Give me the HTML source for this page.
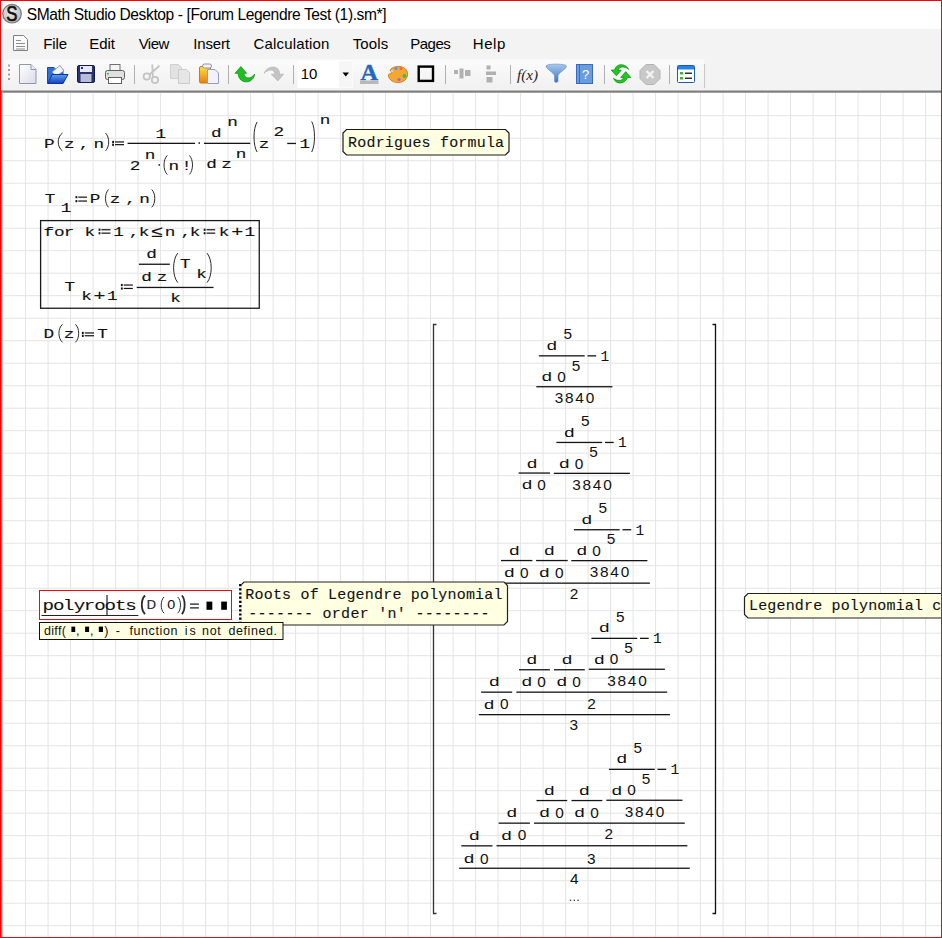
<!DOCTYPE html><html><head><meta charset="utf-8"><style>html,body{margin:0;padding:0;background:#fff;overflow:hidden}svg{display:block}</style></head><body>
<svg width="942" height="938" viewBox="0 0 942 938">
<rect x="0" y="0" width="942" height="29" fill="#fff" />
<rect x="0" y="29" width="942" height="62" fill="#f3f3f3" />
<defs><radialGradient id="sg" cx="0.45" cy="0.4" r="0.6"><stop offset="0" stop-color="#ececec"/><stop offset="1" stop-color="#bcbcbc"/></radialGradient><linearGradient id="tbg" x1="0" y1="0" x2="0" y2="1"><stop offset="0" stop-color="#fbfbfb"/><stop offset="1" stop-color="#f1f1f1"/></linearGradient><linearGradient id="docg" x1="0" y1="0" x2="1" y2="1"><stop offset="0" stop-color="#ffffff"/><stop offset="1" stop-color="#d8dce8"/></linearGradient><linearGradient id="foldg" x1="0" y1="0" x2="0" y2="1"><stop offset="0" stop-color="#5aa0f0"/><stop offset="1" stop-color="#1040c0"/></linearGradient><linearGradient id="greeng" x1="0" y1="0" x2="0" y2="1"><stop offset="0" stop-color="#6fe060"/><stop offset="1" stop-color="#109010"/></linearGradient><linearGradient id="pasteg" x1="0" y1="0" x2="0" y2="1"><stop offset="0" stop-color="#ffe040"/><stop offset="1" stop-color="#e88010"/></linearGradient><linearGradient id="funng" x1="0" y1="0" x2="0" y2="1"><stop offset="0" stop-color="#a8c8ec"/><stop offset="1" stop-color="#3a78c0"/></linearGradient></defs>
<circle cx="12" cy="13.7" r="9.3" fill="url(#sg)" stroke="#7a7a7a" stroke-width="1.2"/>
<text x="6.3" y="21.3" font-family="Liberation Sans" font-size="21.5" fill="#111" stroke="#111" stroke-width="0.7" textLength="11.2" lengthAdjust="spacingAndGlyphs">S</text>
<text x="26.69" y="19.90" font-family="Liberation Sans" font-size="15.6" fill="#000" textLength="359.92" lengthAdjust="spacing" >SMath Studio Desktop - [Forum Legendre Test (1).sm*]</text>
<g fill="none" stroke="#808080" stroke-width="1"><path d="M13.5,35.5H23.5L27.5,39.5V50.5H13.5Z" fill="#fafafa"/><path d="M16,40.5H21M16,43.5H25M16,46.5H25M16,49H25" stroke="#909090"/></g>
<text x="43.37" y="48.60" font-family="Liberation Sans" font-size="15" fill="#000" textLength="23.60" lengthAdjust="spacing" >File</text>
<text x="89.27" y="48.60" font-family="Liberation Sans" font-size="15" fill="#000" textLength="25.54" lengthAdjust="spacing" >Edit</text>
<text x="138.63" y="48.60" font-family="Liberation Sans" font-size="15" fill="#000" textLength="30.73" lengthAdjust="spacing" >View</text>
<text x="193.22" y="48.60" font-family="Liberation Sans" font-size="15" fill="#000" textLength="36.69" lengthAdjust="spacing" >Insert</text>
<text x="253.54" y="48.60" font-family="Liberation Sans" font-size="15" fill="#000" textLength="75.74" lengthAdjust="spacing" >Calculation</text>
<text x="352.66" y="48.60" font-family="Liberation Sans" font-size="15" fill="#000" textLength="35.58" lengthAdjust="spacing" >Tools</text>
<text x="410.27" y="48.60" font-family="Liberation Sans" font-size="15" fill="#000" textLength="40.47" lengthAdjust="spacing" >Pages</text>
<text x="472.77" y="48.60" font-family="Liberation Sans" font-size="15" fill="#000" textLength="32.46" lengthAdjust="spacing" >Help</text>
<rect x="3.5" y="59.5" width="701" height="29" rx="3" fill="url(#tbg)"/>
<line x1="704.5" y1="64" x2="704.5" y2="88" stroke="#c8c8c8"/>
<rect x="8" y="64.5" width="2" height="2" fill="#a0a0a0" />
<rect x="8" y="69" width="2" height="2" fill="#a0a0a0" />
<rect x="8" y="73.5" width="2" height="2" fill="#a0a0a0" />
<rect x="8" y="78" width="2" height="2" fill="#a0a0a0" />
<line x1="134.5" y1="65" x2="134.5" y2="84" stroke="#b0b0b0"/>
<line x1="228.5" y1="65" x2="228.5" y2="84" stroke="#b0b0b0"/>
<line x1="293.5" y1="65" x2="293.5" y2="84" stroke="#b0b0b0"/>
<line x1="445.5" y1="65" x2="445.5" y2="84" stroke="#b0b0b0"/>
<line x1="510.5" y1="65" x2="510.5" y2="84" stroke="#b0b0b0"/>
<line x1="604.5" y1="65" x2="604.5" y2="84" stroke="#b0b0b0"/>
<line x1="669.5" y1="65" x2="669.5" y2="84" stroke="#b0b0b0"/>
<path d="M19.5,64.5H31L36,69.5V83.5H19.5Z" fill="url(#docg)" stroke="#9098a8"/><path d="M31,64.5V69.5H36" fill="#e8ecf4" stroke="#9098a8"/>
<path d="M47.5,67.5H54L56,69.5H63V83.5H47.5Z" fill="#3070d8" stroke="#1a4aa0"/><path d="M52,72L60,65.5L64,71L56,76Z" fill="#f4f4ff" stroke="#8090b0" stroke-width="0.8"/><path d="M48,83.5L52,74.5H68L63,83.5Z" fill="url(#foldg)" stroke="#1030a0"/>
<rect x="77.5" y="65.5" width="17" height="17" rx="1.5" fill="#2a3270" stroke="#141a50"/><rect x="80" y="66" width="12" height="6" fill="#e8e8f4"/><rect x="80.5" y="74" width="11" height="8" fill="#b8bcd8"/><rect x="81" y="67" width="2" height="2" fill="#2a3270"/>
<rect x="110" y="64.5" width="10" height="6" fill="#f4f4f4" stroke="#707070"/><rect x="105.5" y="70.5" width="19" height="9" rx="2" fill="#e0e0e0" stroke="#606060"/><rect x="108.5" y="77.5" width="13" height="6" fill="#fff" stroke="#606060"/><rect x="107" y="73" width="2" height="1.5" fill="#40c040"/>
<g fill="none" stroke="#c4c4c4" stroke-width="1.8"><circle cx="146.8" cy="76.5" r="3.2"/><circle cx="155" cy="80" r="3.2"/><path d="M152.3,64.5L152.8,77M159.4,65.8L149.5,74.5"/></g>
<path d="M170.5,64.5H178.5L181.5,67.5V78.5H170.5Z" fill="#e2e2e2" stroke="#d0d0d0"/><path d="M178.5,69.5H186.5L189.5,72.5V83.5H178.5Z" fill="#e6e6e6" stroke="#cccccc"/>
<rect x="199.5" y="66.5" width="11" height="16.5" rx="1.5" fill="url(#pasteg)" stroke="#c07a20"/><rect x="202.5" y="64" width="9" height="4" rx="2" fill="#f4f4f4" stroke="#9090a8"/><path d="M207.5,69.5H215L218.5,73V83.5H207.5Z" fill="#f2f2ff" stroke="#9a9ac0"/>
<path d="M240.9,66.5L235,73.3L238.2,73.3C238.2,79.5 243,83 249,81.5C252,80.5 254.5,77 254.6,74.2C252,77.5 249,78.5 246.5,77.5C244.8,76.8 244.2,75 244.2,73.3L246.6,73.3Z" fill="#20c020" stroke="#0a8a0a" stroke-width="0.7"/>
<path d="M264.1,73.3C266,68 273,65 277.5,68.5C279,69.8 279.6,72 279.6,74.2L283.7,74.2L277.8,81L271.2,74.2L274.8,74.2C274.5,71.5 273,70 271,70C268.5,70 266,71.5 264.1,73.3Z" fill="#c4c4c4" stroke="#b4b4b4" stroke-width="0.6"/>
<rect x="297.5" y="60.5" width="55.5" height="27.5" fill="#fff" />
<rect x="339" y="61" width="13.5" height="26.5" fill="#f6f6f6" />
<text x="300.66" y="78.60" font-family="Liberation Sans" font-size="15" fill="#000" textLength="16.63" lengthAdjust="spacing" >10</text>
<path d="M342.5,72.5H349L345.75,76.5Z" fill="#000"/>
<text x="360.5" y="80.3" font-family="Liberation Serif" font-weight="bold" font-size="23" fill="#2466c0" stroke="#2466c0" stroke-width="0.4" textLength="17.5" lengthAdjust="spacingAndGlyphs">A</text>
<rect x="360" y="80.5" width="18.5" height="3.5" fill="#b8b8b8" />
<path d="M390,70C394,65 404,65 407,71C409,76 406,82 399,82.5C394,83 389,80 388.5,76C388,73 391,74 392,73Z" fill="#f4a830" stroke="#c87020" stroke-width="0.8"/><circle cx="396" cy="68.5" r="1.6" fill="#40a0ff"/><circle cx="401" cy="68.5" r="1.5" fill="#ff6040"/><circle cx="404.5" cy="76" r="2" fill="#40c040"/><circle cx="399" cy="79.5" r="1.6" fill="#a060e0"/><circle cx="392" cy="71" r="1.3" fill="#d0d0d0"/>
<rect x="418.7" y="66.6" width="14.3" height="14.3" fill="none" stroke="#000" stroke-width="2.4"/>
<g fill="#b0b0b0"><rect x="454" y="70" width="4" height="4"/><rect x="459.5" y="68.5" width="4" height="10"/><rect x="465" y="70" width="5.5" height="6"/><rect x="486.5" y="65.5" width="4" height="4"/><rect x="486" y="71.5" width="10" height="3.5"/><rect x="486.5" y="77" width="6" height="5.5"/></g>
<text x="517" y="79.5" font-family="Liberation Serif" font-style="italic" font-size="14" fill="#222" textLength="21" lengthAdjust="spacingAndGlyphs">f(x)</text>
<path d="M546,66C546,63.5 566.5,63.5 566.5,66C566.5,69 558,73 558,76V81.5C558,82.5 554.5,82.5 554.5,81.5V76C554.5,73 546,69 546,66Z" fill="url(#funng)" stroke="#5a88c0" stroke-width="0.6"/>
<rect x="576.5" y="64.5" width="16" height="19" fill="#6a9ce0" stroke="#3a6ac0"/><line x1="579.5" y1="65" x2="579.5" y2="83" stroke="#3a6ac0"/><text x="582" y="79" font-family="Liberation Sans" font-size="13" fill="#fff">?</text>
<path d="M628.7,69.4C626,63.5 616.5,62.5 614.6,70L611.3,70L616.3,75.8L621.2,70.3L618.2,70.1C619.5,66.3 624.5,65.8 628.7,69.4Z" fill="#22c822" stroke="#0a8a0a" stroke-width="0.7"/><path d="M613.5,78.3C615.5,84.5 624.5,85 627.6,77.5L630.9,77.5L625.7,71.7L620.7,77.5L623.9,77.5C622,81.3 617,81.3 613.5,78.3Z" fill="#22c822" stroke="#0a8a0a" stroke-width="0.7"/>
<path d="M646,64.5H654L660,70.5V78.5L654,84.5H646L640,78.5V70.5Z" fill="#c8c8c8" stroke="#b4b4b4"/><path d="M646.5,71L653.5,78M653.5,71L646.5,78" stroke="#f4f4f4" stroke-width="2.2"/>
<rect x="677.5" y="65.5" width="17" height="17" rx="1" fill="#fff" stroke="#1a5ab0"/><rect x="678" y="66" width="16" height="3.5" fill="#2a80e8"/><rect x="680" y="72" width="3" height="2.5" fill="#40b040"/><rect x="680" y="77" width="3" height="2.5" fill="#40b040"/><rect x="685" y="72.5" width="7" height="1.5" fill="#333"/><rect x="685" y="77.5" width="7" height="1.5" fill="#333"/>
<rect x="2" y="93" width="939" height="844" fill="#fff" />
<path d="M25.60,93V937 M48.10,93V937 M70.60,93V937 M93.10,93V937 M115.60,93V937 M138.10,93V937 M160.60,93V937 M183.10,93V937 M205.60,93V937 M228.10,93V937 M250.60,93V937 M273.10,93V937 M295.60,93V937 M318.10,93V937 M340.60,93V937 M363.10,93V937 M385.60,93V937 M408.10,93V937 M430.60,93V937 M453.10,93V937 M475.60,93V937 M498.10,93V937 M520.60,93V937 M543.10,93V937 M565.60,93V937 M588.10,93V937 M610.60,93V937 M633.10,93V937 M655.60,93V937 M678.10,93V937 M700.60,93V937 M723.10,93V937 M745.60,93V937 M768.10,93V937 M790.60,93V937 M813.10,93V937 M835.60,93V937 M858.10,93V937 M880.60,93V937 M903.10,93V937 M925.60,93V937 M2,115.70H941 M2,138.20H941 M2,160.70H941 M2,183.20H941 M2,205.70H941 M2,228.20H941 M2,250.70H941 M2,273.20H941 M2,295.70H941 M2,318.20H941 M2,340.70H941 M2,363.20H941 M2,385.70H941 M2,408.20H941 M2,430.70H941 M2,453.20H941 M2,475.70H941 M2,498.20H941 M2,520.70H941 M2,543.20H941 M2,565.70H941 M2,588.20H941 M2,610.70H941 M2,633.20H941 M2,655.70H941 M2,678.20H941 M2,700.70H941 M2,723.20H941 M2,745.70H941 M2,768.20H941 M2,790.70H941 M2,813.20H941 M2,835.70H941 M2,858.20H941 M2,880.70H941 M2,903.20H941 M2,925.70H941" stroke="#e4e4e4" stroke-width="1" fill="none"/>
<text transform="translate(49.45,147.60) scale(1.18,0.9)" x="-4.69" y="0" font-family="Liberation Mono" font-size="15" fill="#111" stroke="#111" stroke-width="0.15">P</text>
<path d="M62.40,133.10 C56.80,136.99 56.80,146.91 62.40,150.80" fill="none" stroke="#2a2a2a" stroke-width="1.0"/>
<text transform="translate(69.15,147.60) scale(1.18,0.9)" x="-4.45" y="0" font-family="Liberation Mono" font-size="15" fill="#111" stroke="#111" stroke-width="0.15">z</text>
<text transform="translate(82.75,147.60) scale(1.18,0.9)" x="-3.49" y="0" font-family="Liberation Mono" font-size="15" fill="#111" stroke="#111" stroke-width="0.15">,</text>
<text transform="translate(98.75,147.60) scale(1.18,0.9)" x="-4.50" y="0" font-family="Liberation Mono" font-size="15" fill="#111" stroke="#111" stroke-width="0.15">n</text>
<path d="M105.50,133.10 C109.77,136.99 109.77,146.91 105.50,150.80" fill="none" stroke="#2a2a2a" stroke-width="1.0"/>
<rect x="112.20" y="140.85" width="1.8" height="2.2" fill="#111" />
<rect x="112.20" y="143.65" width="1.8" height="2.2" fill="#111" />
<line x1="115.00" y1="141.95" x2="124.00" y2="141.95" stroke="#111" stroke-width="1.2"/>
<line x1="115.00" y1="144.65" x2="124.00" y2="144.65" stroke="#111" stroke-width="1.2"/>
<rect x="127.60" y="142.70" width="67.40" height="1.3" fill="#151515"/>
<text transform="translate(161.00,137.50) scale(1.18,0.9)" x="-4.68" y="0" font-family="Liberation Mono" font-size="15" fill="#111" stroke="#111" stroke-width="0.15">1</text>
<text transform="translate(135.00,169.80) scale(1.18,0.9)" x="-4.50" y="0" font-family="Liberation Mono" font-size="15" fill="#111" stroke="#111" stroke-width="0.15">2</text>
<text transform="translate(150.10,158.50) scale(1.18,0.9)" x="-4.50" y="0" font-family="Liberation Mono" font-size="15" fill="#111" stroke="#111" stroke-width="0.15">n</text>
<rect x="158.5" y="164.2" width="1.5" height="1.5" fill="#111" />
<path d="M167.30,155.40 C162.90,159.60 162.90,170.30 167.30,174.50" fill="none" stroke="#2a2a2a" stroke-width="1.0"/>
<text transform="translate(173.70,169.50) scale(1.18,0.9)" x="-4.50" y="0" font-family="Liberation Mono" font-size="15" fill="#111" stroke="#111" stroke-width="0.15">n</text>
<text transform="translate(186.60,169.80) scale(1.18,0.9)" x="-4.50" y="0" font-family="Liberation Mono" font-size="15" fill="#111" stroke="#111" stroke-width="0.15">!</text>
<path d="M189.30,155.40 C193.57,159.60 193.57,170.30 189.30,174.50" fill="none" stroke="#2a2a2a" stroke-width="1.0"/>
<rect x="198.5" y="142.3" width="1.5" height="1.5" fill="#111" />
<rect x="204.00" y="142.70" width="46.20" height="1.3" fill="#151515"/>
<text transform="translate(216.20,137.30) scale(1.18,0.9)" x="-4.35" y="0" font-family="Liberation Mono" font-size="15" fill="#111" stroke="#111" stroke-width="0.15">d</text>
<text transform="translate(232.50,126.20) scale(1.18,0.9)" x="-4.50" y="0" font-family="Liberation Mono" font-size="15" fill="#111" stroke="#111" stroke-width="0.15">n</text>
<text transform="translate(211.40,168.30) scale(1.18,0.9)" x="-4.35" y="0" font-family="Liberation Mono" font-size="15" fill="#111" stroke="#111" stroke-width="0.15">d</text>
<text transform="translate(226.50,168.30) scale(1.18,0.9)" x="-4.45" y="0" font-family="Liberation Mono" font-size="15" fill="#111" stroke="#111" stroke-width="0.15">z</text>
<text transform="translate(241.00,157.60) scale(1.18,0.9)" x="-4.50" y="0" font-family="Liberation Mono" font-size="15" fill="#111" stroke="#111" stroke-width="0.15">n</text>
<path d="M257.10,122.00 C252.97,128.60 252.97,145.40 257.10,152.00" fill="none" stroke="#2a2a2a" stroke-width="1.0"/>
<text transform="translate(264.00,147.50) scale(1.18,0.9)" x="-4.45" y="0" font-family="Liberation Mono" font-size="15" fill="#111" stroke="#111" stroke-width="0.15">z</text>
<text transform="translate(278.90,136.30) scale(1.18,0.9)" x="-4.50" y="0" font-family="Liberation Mono" font-size="15" fill="#111" stroke="#111" stroke-width="0.15">2</text>
<rect x="287.20" y="142.80" width="8.80" height="1.3" fill="#151515"/>
<text transform="translate(305.00,147.50) scale(1.18,0.9)" x="-4.68" y="0" font-family="Liberation Mono" font-size="15" fill="#111" stroke="#111" stroke-width="0.15">1</text>
<path d="M311.70,121.50 C315.43,128.21 315.43,145.29 311.70,152.00" fill="none" stroke="#2a2a2a" stroke-width="1.0"/>
<text transform="translate(325.10,123.90) scale(1.18,0.9)" x="-4.50" y="0" font-family="Liberation Mono" font-size="15" fill="#111" stroke="#111" stroke-width="0.15">n</text>
<path d="M346.5,129.5H505.5L509,133V151.5L505.5,155H346.5L343,151.5V133Z" fill="#ffffe1" stroke="#1a1a1a" stroke-width="1.2"/>
<text transform="translate(0,146.60) scale(1,0.92)" x="348.11" y="0" font-family="Liberation Mono" font-size="15" fill="#111" textLength="155.99" lengthAdjust="spacing" stroke="#111" stroke-width="0.12">Rodrigues formula</text>
<text transform="translate(50.10,203.40) scale(1.18,0.9)" x="-4.50" y="0" font-family="Liberation Mono" font-size="15" fill="#111" stroke="#111" stroke-width="0.15">T</text>
<text transform="translate(66.30,212.40) scale(1.18,0.9)" x="-4.68" y="0" font-family="Liberation Mono" font-size="15" fill="#111" stroke="#111" stroke-width="0.15">1</text>
<rect x="75.50" y="196.05" width="1.8" height="2.2" fill="#111" />
<rect x="75.50" y="200.05" width="1.8" height="2.2" fill="#111" />
<line x1="78.30" y1="197.15" x2="87.00" y2="197.15" stroke="#111" stroke-width="1.2"/>
<line x1="78.30" y1="201.05" x2="87.00" y2="201.05" stroke="#111" stroke-width="1.2"/>
<text transform="translate(95.25,203.40) scale(1.18,0.9)" x="-4.69" y="0" font-family="Liberation Mono" font-size="15" fill="#111" stroke="#111" stroke-width="0.15">P</text>
<path d="M108.50,189.50 C104.50,193.42 104.50,203.38 108.50,207.30" fill="none" stroke="#2a2a2a" stroke-width="1.0"/>
<text transform="translate(114.90,203.40) scale(1.18,0.9)" x="-4.45" y="0" font-family="Liberation Mono" font-size="15" fill="#111" stroke="#111" stroke-width="0.15">z</text>
<text transform="translate(129.40,203.40) scale(1.18,0.9)" x="-3.49" y="0" font-family="Liberation Mono" font-size="15" fill="#111" stroke="#111" stroke-width="0.15">,</text>
<text transform="translate(144.60,203.40) scale(1.18,0.9)" x="-4.50" y="0" font-family="Liberation Mono" font-size="15" fill="#111" stroke="#111" stroke-width="0.15">n</text>
<path d="M151.70,189.50 C155.83,193.42 155.83,203.38 151.70,207.30" fill="none" stroke="#2a2a2a" stroke-width="1.0"/>
<rect x="40.6" y="220.6" width="218.65" height="87.65" fill="none" stroke="#1a1a1a" stroke-width="1.3"/>
<text transform="translate(48.80,235.80) scale(1.18,0.9)" x="-4.53" y="0" font-family="Liberation Mono" font-size="15" fill="#111" stroke="#111" stroke-width="0.15">f</text>
<text transform="translate(59.30,235.80) scale(1.18,0.9)" x="-4.49" y="0" font-family="Liberation Mono" font-size="15" fill="#111" stroke="#111" stroke-width="0.15">o</text>
<text transform="translate(69.30,235.80) scale(1.18,0.9)" x="-4.71" y="0" font-family="Liberation Mono" font-size="15" fill="#111" stroke="#111" stroke-width="0.15">r</text>
<text transform="translate(90.45,235.80) scale(1.18,0.9)" x="-4.98" y="0" font-family="Liberation Mono" font-size="15" fill="#111" stroke="#111" stroke-width="0.15">k</text>
<rect x="98.60" y="228.65" width="1.8" height="2.2" fill="#111" />
<rect x="98.60" y="232.15" width="1.8" height="2.2" fill="#111" />
<line x1="101.40" y1="229.75" x2="110.50" y2="229.75" stroke="#111" stroke-width="1.2"/>
<line x1="101.40" y1="233.15" x2="110.50" y2="233.15" stroke="#111" stroke-width="1.2"/>
<text transform="translate(118.80,235.80) scale(1.18,0.9)" x="-4.68" y="0" font-family="Liberation Mono" font-size="15" fill="#111" stroke="#111" stroke-width="0.15">1</text>
<text transform="translate(132.85,235.80) scale(1.18,0.9)" x="-3.49" y="0" font-family="Liberation Mono" font-size="15" fill="#111" stroke="#111" stroke-width="0.15">,</text>
<text transform="translate(144.60,235.80) scale(1.18,0.9)" x="-4.98" y="0" font-family="Liberation Mono" font-size="15" fill="#111" stroke="#111" stroke-width="0.15">k</text>
<text transform="translate(156.90,236.50) scale(1.18,0.9)" x="-5.24" y="0" font-family="Liberation Mono" font-size="17.5" fill="#111" stroke="#111" stroke-width="0.15">≤</text>
<text transform="translate(170.00,235.80) scale(1.18,0.9)" x="-4.50" y="0" font-family="Liberation Mono" font-size="15" fill="#111" stroke="#111" stroke-width="0.15">n</text>
<text transform="translate(184.50,235.80) scale(1.18,0.9)" x="-3.49" y="0" font-family="Liberation Mono" font-size="15" fill="#111" stroke="#111" stroke-width="0.15">,</text>
<text transform="translate(195.50,235.80) scale(1.18,0.9)" x="-4.98" y="0" font-family="Liberation Mono" font-size="15" fill="#111" stroke="#111" stroke-width="0.15">k</text>
<rect x="203.70" y="228.65" width="1.8" height="2.2" fill="#111" />
<rect x="203.70" y="232.15" width="1.8" height="2.2" fill="#111" />
<line x1="206.50" y1="229.75" x2="215.20" y2="229.75" stroke="#111" stroke-width="1.2"/>
<line x1="206.50" y1="233.15" x2="215.20" y2="233.15" stroke="#111" stroke-width="1.2"/>
<text transform="translate(224.50,235.80) scale(1.18,0.9)" x="-4.98" y="0" font-family="Liberation Mono" font-size="15" fill="#111" stroke="#111" stroke-width="0.15">k</text>
<text transform="translate(237.30,236.20) scale(1.18,0.9)" x="-5.09" y="0" font-family="Liberation Mono" font-size="17" fill="#111" stroke="#111" stroke-width="0.15">+</text>
<text transform="translate(250.10,235.80) scale(1.18,0.9)" x="-4.68" y="0" font-family="Liberation Mono" font-size="15" fill="#111" stroke="#111" stroke-width="0.15">1</text>
<text transform="translate(69.90,291.00) scale(1.18,0.9)" x="-4.50" y="0" font-family="Liberation Mono" font-size="15" fill="#111" stroke="#111" stroke-width="0.15">T</text>
<text transform="translate(87.00,299.70) scale(1.18,0.9)" x="-4.98" y="0" font-family="Liberation Mono" font-size="15" fill="#111" stroke="#111" stroke-width="0.15">k</text>
<text transform="translate(99.40,300.10) scale(1.18,0.9)" x="-5.09" y="0" font-family="Liberation Mono" font-size="17" fill="#111" stroke="#111" stroke-width="0.15">+</text>
<text transform="translate(112.50,299.70) scale(1.18,0.9)" x="-4.68" y="0" font-family="Liberation Mono" font-size="15" fill="#111" stroke="#111" stroke-width="0.15">1</text>
<rect x="120.90" y="283.95" width="1.8" height="2.2" fill="#111" />
<rect x="120.90" y="287.45" width="1.8" height="2.2" fill="#111" />
<line x1="123.70" y1="285.05" x2="132.80" y2="285.05" stroke="#111" stroke-width="1.2"/>
<line x1="123.70" y1="288.45" x2="132.80" y2="288.45" stroke="#111" stroke-width="1.2"/>
<rect x="136.70" y="286.80" width="76.80" height="1.3" fill="#151515"/>
<rect x="138.90" y="263.60" width="30.90" height="1.3" fill="#151515"/>
<text transform="translate(151.50,258.40) scale(1.18,0.9)" x="-4.35" y="0" font-family="Liberation Mono" font-size="15" fill="#111" stroke="#111" stroke-width="0.15">d</text>
<text transform="translate(146.40,280.70) scale(1.18,0.9)" x="-4.35" y="0" font-family="Liberation Mono" font-size="15" fill="#111" stroke="#111" stroke-width="0.15">d</text>
<text transform="translate(162.00,280.70) scale(1.18,0.9)" x="-4.45" y="0" font-family="Liberation Mono" font-size="15" fill="#111" stroke="#111" stroke-width="0.15">z</text>
<path d="M177.80,253.10 C172.20,259.59 172.20,276.11 177.80,282.60" fill="none" stroke="#2a2a2a" stroke-width="1.0"/>
<text transform="translate(185.40,268.30) scale(1.18,0.9)" x="-4.50" y="0" font-family="Liberation Mono" font-size="15" fill="#111" stroke="#111" stroke-width="0.15">T</text>
<text transform="translate(202.00,277.70) scale(1.18,0.9)" x="-4.98" y="0" font-family="Liberation Mono" font-size="15" fill="#111" stroke="#111" stroke-width="0.15">k</text>
<path d="M207.00,253.10 C212.60,259.59 212.60,276.11 207.00,282.60" fill="none" stroke="#2a2a2a" stroke-width="1.0"/>
<text transform="translate(176.00,302.20) scale(1.18,0.9)" x="-4.98" y="0" font-family="Liberation Mono" font-size="15" fill="#111" stroke="#111" stroke-width="0.15">k</text>
<text transform="translate(49.00,337.80) scale(1.18,0.9)" x="-4.71" y="0" font-family="Liberation Mono" font-size="15" fill="#111" stroke="#111" stroke-width="0.15">D</text>
<path d="M62.50,324.30 C57.70,328.26 57.70,338.34 62.50,342.30" fill="none" stroke="#2a2a2a" stroke-width="1.0"/>
<text transform="translate(69.00,338.20) scale(1.18,0.9)" x="-4.45" y="0" font-family="Liberation Mono" font-size="15" fill="#111" stroke="#111" stroke-width="0.15">z</text>
<path d="M75.40,324.30 C79.80,328.26 79.80,338.34 75.40,342.30" fill="none" stroke="#2a2a2a" stroke-width="1.0"/>
<rect x="81.90" y="331.85" width="1.8" height="2.2" fill="#111" />
<rect x="81.90" y="334.75" width="1.8" height="2.2" fill="#111" />
<line x1="84.70" y1="332.95" x2="94.00" y2="332.95" stroke="#111" stroke-width="1.2"/>
<line x1="84.70" y1="335.75" x2="94.00" y2="335.75" stroke="#111" stroke-width="1.2"/>
<text transform="translate(102.50,337.80) scale(1.18,0.9)" x="-4.50" y="0" font-family="Liberation Mono" font-size="15" fill="#111" stroke="#111" stroke-width="0.15">T</text>
<path d="M436.5,324.5H433.5V913.5H436.5" fill="none" stroke="#333" stroke-width="1.3"/>
<path d="M712.5,324.5H715.5V913.5H712.5" fill="none" stroke="#111" stroke-width="1.3"/>
<text transform="translate(567.80,339.40) scale(1.1,1.0)" x="-3.88" y="0" font-family="Liberation Sans" font-size="14" fill="#111" >5</text>
<text transform="translate(551.50,349.90) scale(1.28,0.92)" x="-4.20" y="0" font-family="Liberation Mono" font-size="14.5" fill="#111" >d</text>
<rect x="538.90" y="355.20" width="45.80" height="1.3" fill="#151515"/>
<rect x="587.50" y="355.20" width="8.70" height="1.3" fill="#151515"/>
<text x="600.38" y="360.70" font-family="Liberation Mono" font-size="14.5" fill="#111" >1</text>
<text transform="translate(576.10,370.50) scale(1.1,1.0)" x="-3.88" y="0" font-family="Liberation Sans" font-size="14" fill="#111" >5</text>
<text transform="translate(546.70,381.10) scale(1.28,0.92)" x="-4.20" y="0" font-family="Liberation Mono" font-size="14.5" fill="#111" >d</text>
<text transform="translate(561.40,381.90) scale(1.1,1.0)" x="-3.89" y="0" font-family="Liberation Sans" font-size="14" fill="#111" >0</text>
<rect x="536.30" y="386.10" width="76.10" height="1.3" fill="#151515"/>
<text transform="translate(559.00,403.00) scale(1.1,1.0)" x="-3.85" y="0" font-family="Liberation Sans" font-size="14" fill="#111" >3</text>
<text transform="translate(569.30,403.00) scale(1.1,1.0)" x="-3.89" y="0" font-family="Liberation Sans" font-size="14" fill="#111" >8</text>
<text transform="translate(579.60,403.00) scale(1.1,1.0)" x="-3.85" y="0" font-family="Liberation Sans" font-size="14" fill="#111" >4</text>
<text transform="translate(589.90,403.00) scale(1.1,1.0)" x="-3.89" y="0" font-family="Liberation Sans" font-size="14" fill="#111" >0</text>
<text transform="translate(585.30,426.00) scale(1.1,1.0)" x="-3.88" y="0" font-family="Liberation Sans" font-size="14" fill="#111" >5</text>
<text transform="translate(569.00,436.50) scale(1.28,0.92)" x="-4.20" y="0" font-family="Liberation Mono" font-size="14.5" fill="#111" >d</text>
<rect x="556.40" y="441.80" width="45.80" height="1.3" fill="#151515"/>
<rect x="605.00" y="441.80" width="8.70" height="1.3" fill="#151515"/>
<text x="617.88" y="447.30" font-family="Liberation Mono" font-size="14.5" fill="#111" >1</text>
<text transform="translate(593.60,457.10) scale(1.1,1.0)" x="-3.88" y="0" font-family="Liberation Sans" font-size="14" fill="#111" >5</text>
<text transform="translate(564.20,467.70) scale(1.28,0.92)" x="-4.20" y="0" font-family="Liberation Mono" font-size="14.5" fill="#111" >d</text>
<text transform="translate(578.90,468.50) scale(1.1,1.0)" x="-3.89" y="0" font-family="Liberation Sans" font-size="14" fill="#111" >0</text>
<rect x="553.80" y="472.70" width="76.10" height="1.3" fill="#151515"/>
<text transform="translate(576.50,489.60) scale(1.1,1.0)" x="-3.85" y="0" font-family="Liberation Sans" font-size="14" fill="#111" >3</text>
<text transform="translate(586.80,489.60) scale(1.1,1.0)" x="-3.89" y="0" font-family="Liberation Sans" font-size="14" fill="#111" >8</text>
<text transform="translate(597.10,489.60) scale(1.1,1.0)" x="-3.85" y="0" font-family="Liberation Sans" font-size="14" fill="#111" >4</text>
<text transform="translate(607.40,489.60) scale(1.1,1.0)" x="-3.89" y="0" font-family="Liberation Sans" font-size="14" fill="#111" >0</text>
<text transform="translate(531.75,467.50) scale(1.28,0.92)" x="-4.20" y="0" font-family="Liberation Mono" font-size="14.5" fill="#111" >d</text>
<rect x="518.60" y="472.40" width="31.40" height="1.3" fill="#151515"/>
<text transform="translate(526.75,489.20) scale(1.28,0.92)" x="-4.20" y="0" font-family="Liberation Mono" font-size="14.5" fill="#111" >d</text>
<text transform="translate(541.40,490.00) scale(1.1,1.0)" x="-3.89" y="0" font-family="Liberation Sans" font-size="14" fill="#111" >0</text>
<text transform="translate(602.80,513.30) scale(1.1,1.0)" x="-3.88" y="0" font-family="Liberation Sans" font-size="14" fill="#111" >5</text>
<text transform="translate(586.50,523.80) scale(1.28,0.92)" x="-4.20" y="0" font-family="Liberation Mono" font-size="14.5" fill="#111" >d</text>
<rect x="573.90" y="529.10" width="45.80" height="1.3" fill="#151515"/>
<rect x="622.50" y="529.10" width="8.70" height="1.3" fill="#151515"/>
<text x="635.38" y="534.60" font-family="Liberation Mono" font-size="14.5" fill="#111" >1</text>
<text transform="translate(611.10,544.40) scale(1.1,1.0)" x="-3.88" y="0" font-family="Liberation Sans" font-size="14" fill="#111" >5</text>
<text transform="translate(581.70,555.00) scale(1.28,0.92)" x="-4.20" y="0" font-family="Liberation Mono" font-size="14.5" fill="#111" >d</text>
<text transform="translate(596.40,555.80) scale(1.1,1.0)" x="-3.89" y="0" font-family="Liberation Sans" font-size="14" fill="#111" >0</text>
<rect x="571.30" y="560.00" width="76.10" height="1.3" fill="#151515"/>
<text transform="translate(594.00,576.90) scale(1.1,1.0)" x="-3.85" y="0" font-family="Liberation Sans" font-size="14" fill="#111" >3</text>
<text transform="translate(604.30,576.90) scale(1.1,1.0)" x="-3.89" y="0" font-family="Liberation Sans" font-size="14" fill="#111" >8</text>
<text transform="translate(614.60,576.90) scale(1.1,1.0)" x="-3.85" y="0" font-family="Liberation Sans" font-size="14" fill="#111" >4</text>
<text transform="translate(624.90,576.90) scale(1.1,1.0)" x="-3.89" y="0" font-family="Liberation Sans" font-size="14" fill="#111" >0</text>
<text transform="translate(514.10,555.00) scale(1.28,0.92)" x="-4.20" y="0" font-family="Liberation Mono" font-size="14.5" fill="#111" >d</text>
<text transform="translate(549.10,555.00) scale(1.28,0.92)" x="-4.20" y="0" font-family="Liberation Mono" font-size="14.5" fill="#111" >d</text>
<rect x="501.00" y="559.90" width="31.40" height="1.3" fill="#151515"/>
<rect x="536.10" y="559.90" width="31.60" height="1.3" fill="#151515"/>
<text transform="translate(509.00,577.10) scale(1.28,0.92)" x="-4.20" y="0" font-family="Liberation Mono" font-size="14.5" fill="#111" >d</text>
<text transform="translate(524.30,577.90) scale(1.1,1.0)" x="-3.89" y="0" font-family="Liberation Sans" font-size="14" fill="#111" >0</text>
<text transform="translate(544.00,577.10) scale(1.28,0.92)" x="-4.20" y="0" font-family="Liberation Mono" font-size="14.5" fill="#111" >d</text>
<text transform="translate(559.30,577.90) scale(1.1,1.0)" x="-3.89" y="0" font-family="Liberation Sans" font-size="14" fill="#111" >0</text>
<rect x="501.00" y="582.50" width="148.90" height="1.3" fill="#151515"/>
<text transform="translate(574.00,599.10) scale(1.1,1.0)" x="-3.89" y="0" font-family="Liberation Sans" font-size="14" fill="#111" >2</text>
<text transform="translate(620.30,621.90) scale(1.1,1.0)" x="-3.88" y="0" font-family="Liberation Sans" font-size="14" fill="#111" >5</text>
<text transform="translate(604.00,632.40) scale(1.28,0.92)" x="-4.20" y="0" font-family="Liberation Mono" font-size="14.5" fill="#111" >d</text>
<rect x="591.40" y="637.70" width="45.80" height="1.3" fill="#151515"/>
<rect x="640.00" y="637.70" width="8.70" height="1.3" fill="#151515"/>
<text x="652.88" y="643.20" font-family="Liberation Mono" font-size="14.5" fill="#111" >1</text>
<text transform="translate(628.60,653.00) scale(1.1,1.0)" x="-3.88" y="0" font-family="Liberation Sans" font-size="14" fill="#111" >5</text>
<text transform="translate(599.20,663.60) scale(1.28,0.92)" x="-4.20" y="0" font-family="Liberation Mono" font-size="14.5" fill="#111" >d</text>
<text transform="translate(613.90,664.40) scale(1.1,1.0)" x="-3.89" y="0" font-family="Liberation Sans" font-size="14" fill="#111" >0</text>
<rect x="588.80" y="668.60" width="76.10" height="1.3" fill="#151515"/>
<text transform="translate(611.50,685.50) scale(1.1,1.0)" x="-3.85" y="0" font-family="Liberation Sans" font-size="14" fill="#111" >3</text>
<text transform="translate(621.80,685.50) scale(1.1,1.0)" x="-3.89" y="0" font-family="Liberation Sans" font-size="14" fill="#111" >8</text>
<text transform="translate(632.10,685.50) scale(1.1,1.0)" x="-3.85" y="0" font-family="Liberation Sans" font-size="14" fill="#111" >4</text>
<text transform="translate(642.40,685.50) scale(1.1,1.0)" x="-3.89" y="0" font-family="Liberation Sans" font-size="14" fill="#111" >0</text>
<text transform="translate(531.65,663.50) scale(1.28,0.92)" x="-4.20" y="0" font-family="Liberation Mono" font-size="14.5" fill="#111" >d</text>
<text transform="translate(566.75,663.50) scale(1.28,0.92)" x="-4.20" y="0" font-family="Liberation Mono" font-size="14.5" fill="#111" >d</text>
<rect x="519.00" y="669.10" width="30.90" height="1.3" fill="#151515"/>
<rect x="554.00" y="669.10" width="30.80" height="1.3" fill="#151515"/>
<text transform="translate(526.55,685.80) scale(1.28,0.92)" x="-4.20" y="0" font-family="Liberation Mono" font-size="14.5" fill="#111" >d</text>
<text transform="translate(541.50,686.60) scale(1.1,1.0)" x="-3.89" y="0" font-family="Liberation Sans" font-size="14" fill="#111" >0</text>
<text transform="translate(561.65,685.80) scale(1.28,0.92)" x="-4.20" y="0" font-family="Liberation Mono" font-size="14.5" fill="#111" >d</text>
<text transform="translate(576.60,686.60) scale(1.1,1.0)" x="-3.89" y="0" font-family="Liberation Sans" font-size="14" fill="#111" >0</text>
<text transform="translate(494.10,685.80) scale(1.28,0.92)" x="-4.20" y="0" font-family="Liberation Mono" font-size="14.5" fill="#111" >d</text>
<rect x="481.10" y="691.50" width="31.10" height="1.3" fill="#151515"/>
<rect x="516.40" y="691.50" width="150.80" height="1.3" fill="#151515"/>
<text transform="translate(488.85,708.50) scale(1.28,0.92)" x="-4.20" y="0" font-family="Liberation Mono" font-size="14.5" fill="#111" >d</text>
<text transform="translate(504.20,709.30) scale(1.1,1.0)" x="-3.89" y="0" font-family="Liberation Sans" font-size="14" fill="#111" >0</text>
<text transform="translate(591.50,709.30) scale(1.1,1.0)" x="-3.89" y="0" font-family="Liberation Sans" font-size="14" fill="#111" >2</text>
<rect x="478.80" y="714.00" width="191.10" height="1.3" fill="#151515"/>
<text transform="translate(573.70,730.30) scale(1.1,1.0)" x="-3.85" y="0" font-family="Liberation Sans" font-size="14" fill="#111" >3</text>
<text transform="translate(637.80,752.90) scale(1.1,1.0)" x="-3.88" y="0" font-family="Liberation Sans" font-size="14" fill="#111" >5</text>
<text transform="translate(621.50,763.40) scale(1.28,0.92)" x="-4.20" y="0" font-family="Liberation Mono" font-size="14.5" fill="#111" >d</text>
<rect x="608.90" y="768.70" width="45.80" height="1.3" fill="#151515"/>
<rect x="657.50" y="768.70" width="8.70" height="1.3" fill="#151515"/>
<text x="670.38" y="774.20" font-family="Liberation Mono" font-size="14.5" fill="#111" >1</text>
<text transform="translate(646.10,784.00) scale(1.1,1.0)" x="-3.88" y="0" font-family="Liberation Sans" font-size="14" fill="#111" >5</text>
<text transform="translate(616.70,794.60) scale(1.28,0.92)" x="-4.20" y="0" font-family="Liberation Mono" font-size="14.5" fill="#111" >d</text>
<text transform="translate(631.40,795.40) scale(1.1,1.0)" x="-3.89" y="0" font-family="Liberation Sans" font-size="14" fill="#111" >0</text>
<rect x="606.30" y="799.60" width="76.10" height="1.3" fill="#151515"/>
<text transform="translate(629.00,816.50) scale(1.1,1.0)" x="-3.85" y="0" font-family="Liberation Sans" font-size="14" fill="#111" >3</text>
<text transform="translate(639.30,816.50) scale(1.1,1.0)" x="-3.89" y="0" font-family="Liberation Sans" font-size="14" fill="#111" >8</text>
<text transform="translate(649.60,816.50) scale(1.1,1.0)" x="-3.85" y="0" font-family="Liberation Sans" font-size="14" fill="#111" >4</text>
<text transform="translate(659.90,816.50) scale(1.1,1.0)" x="-3.89" y="0" font-family="Liberation Sans" font-size="14" fill="#111" >0</text>
<text transform="translate(549.20,794.60) scale(1.28,0.92)" x="-4.20" y="0" font-family="Liberation Mono" font-size="14.5" fill="#111" >d</text>
<text transform="translate(584.15,794.60) scale(1.28,0.92)" x="-4.20" y="0" font-family="Liberation Mono" font-size="14.5" fill="#111" >d</text>
<rect x="536.50" y="799.90" width="30.70" height="1.3" fill="#151515"/>
<rect x="571.50" y="799.90" width="30.80" height="1.3" fill="#151515"/>
<text transform="translate(544.25,817.40) scale(1.28,0.92)" x="-4.20" y="0" font-family="Liberation Mono" font-size="14.5" fill="#111" >d</text>
<text transform="translate(559.50,818.20) scale(1.1,1.0)" x="-3.89" y="0" font-family="Liberation Sans" font-size="14" fill="#111" >0</text>
<text transform="translate(579.25,817.40) scale(1.28,0.92)" x="-4.20" y="0" font-family="Liberation Mono" font-size="14.5" fill="#111" >d</text>
<text transform="translate(594.50,818.20) scale(1.1,1.0)" x="-3.89" y="0" font-family="Liberation Sans" font-size="14" fill="#111" >0</text>
<text transform="translate(511.50,817.40) scale(1.28,0.92)" x="-4.20" y="0" font-family="Liberation Mono" font-size="14.5" fill="#111" >d</text>
<rect x="498.60" y="822.50" width="31.30" height="1.3" fill="#151515"/>
<rect x="534.00" y="822.50" width="150.80" height="1.3" fill="#151515"/>
<text transform="translate(506.45,839.60) scale(1.28,0.92)" x="-4.20" y="0" font-family="Liberation Mono" font-size="14.5" fill="#111" >d</text>
<text transform="translate(521.90,840.40) scale(1.1,1.0)" x="-3.89" y="0" font-family="Liberation Sans" font-size="14" fill="#111" >0</text>
<text transform="translate(608.80,839.30) scale(1.1,1.0)" x="-3.89" y="0" font-family="Liberation Sans" font-size="14" fill="#111" >2</text>
<text transform="translate(474.20,839.60) scale(1.28,0.92)" x="-4.20" y="0" font-family="Liberation Mono" font-size="14.5" fill="#111" >d</text>
<rect x="461.30" y="845.20" width="31.20" height="1.3" fill="#151515"/>
<rect x="496.50" y="845.10" width="190.90" height="1.3" fill="#151515"/>
<text transform="translate(468.95,862.70) scale(1.28,0.92)" x="-4.20" y="0" font-family="Liberation Mono" font-size="14.5" fill="#111" >d</text>
<text transform="translate(484.20,863.50) scale(1.1,1.0)" x="-3.89" y="0" font-family="Liberation Sans" font-size="14" fill="#111" >0</text>
<text transform="translate(591.35,863.50) scale(1.1,1.0)" x="-3.85" y="0" font-family="Liberation Sans" font-size="14" fill="#111" >3</text>
<rect x="459.10" y="867.60" width="230.70" height="1.3" fill="#151515"/>
<text transform="translate(574.15,884.40) scale(1.1,1.0)" x="-3.85" y="0" font-family="Liberation Sans" font-size="14" fill="#111" >4</text>
<rect x="569.8" y="899.6" width="1.4" height="1.4" fill="#444" />
<rect x="573.5999999999999" y="899.6" width="1.4" height="1.4" fill="#444" />
<rect x="577.4" y="899.6" width="1.4" height="1.4" fill="#444" />
<path d="M240.5,625H504L507.5,621.5V585.5L504,582H244L240.5,585.5Z" fill="#ffffe1" stroke="#222" stroke-width="1.2"/>
<line x1="240.3" y1="584" x2="240.3" y2="625" stroke="#ffffe1" stroke-width="2.4"/>
<line x1="240.3" y1="584" x2="240.3" y2="626" stroke="#000" stroke-width="2.4" stroke-dasharray="2.2,2"/>
<text transform="translate(0,598.60) scale(1,0.92)" x="245.31" y="0" font-family="Liberation Mono" font-size="15" fill="#111" textLength="257.21" lengthAdjust="spacing" stroke="#111" stroke-width="0.12">Roots of Legendre polynomial</text>
<text transform="translate(0,618.20) scale(1,0.92)" x="248.25" y="0" font-family="Liberation Mono" font-size="15" fill="#111" textLength="241.20" lengthAdjust="spacing" stroke="#111" stroke-width="0.12">------- order 'n' --------</text>
<path d="M960,593.5H748L744.5,597V614.5L748,618H960" fill="#ffffe1" stroke="#222" stroke-width="1.2"/>
<text transform="translate(0,610.30) scale(1,0.92)" x="749.06" y="0" font-family="Liberation Mono" font-size="15" fill="#111" textLength="192.23" lengthAdjust="spacing" stroke="#111" stroke-width="0.12">Legendre polynomial c</text>
<rect x="39.5" y="590.5" width="192" height="29" fill="#fff" stroke="#ff0000" stroke-width="1"/>
<text transform="translate(48.50,609.80) scale(1.2,0.86)" x="-4.96" y="0" font-family="Liberation Mono" font-size="16" fill="#111" stroke="#111" stroke-width="0.1">p</text>
<text transform="translate(58.80,609.80) scale(1.2,0.86)" x="-4.79" y="0" font-family="Liberation Mono" font-size="16" fill="#111" stroke="#111" stroke-width="0.1">o</text>
<text transform="translate(69.10,609.80) scale(1.2,0.86)" x="-5.40" y="0" font-family="Liberation Mono" font-size="16" fill="#111" stroke="#111" stroke-width="0.1">l</text>
<text transform="translate(79.40,609.80) scale(1.2,0.86)" x="-4.79" y="0" font-family="Liberation Mono" font-size="16" fill="#111" stroke="#111" stroke-width="0.1">y</text>
<text transform="translate(89.70,609.80) scale(1.2,0.86)" x="-5.03" y="0" font-family="Liberation Mono" font-size="16" fill="#111" stroke="#111" stroke-width="0.1">r</text>
<text transform="translate(100.00,609.80) scale(1.2,0.86)" x="-4.79" y="0" font-family="Liberation Mono" font-size="16" fill="#111" stroke="#111" stroke-width="0.1">o</text>
<text transform="translate(110.30,609.80) scale(1.2,0.86)" x="-4.79" y="0" font-family="Liberation Mono" font-size="16" fill="#111" stroke="#111" stroke-width="0.1">o</text>
<text transform="translate(120.60,609.80) scale(1.2,0.86)" x="-4.71" y="0" font-family="Liberation Mono" font-size="16" fill="#111" stroke="#111" stroke-width="0.1">t</text>
<text transform="translate(130.90,609.80) scale(1.2,0.86)" x="-4.79" y="0" font-family="Liberation Mono" font-size="16" fill="#111" stroke="#111" stroke-width="0.1">s</text>
<line x1="41.4" y1="615.5" x2="138.4" y2="615.5" stroke="#222" stroke-width="1"/>
<line x1="107" y1="595" x2="107" y2="615.3" stroke="#222" stroke-width="1.2"/>
<path d="M145.10,595.50 C140.70,599.59 140.70,610.01 145.10,614.10" fill="none" stroke="#2a2a2a" stroke-width="1.8"/>
<text transform="translate(151.50,609.40) scale(1.25,0.95)" x="-4.24" y="0" font-family="Liberation Mono" font-size="13.5" fill="#333" >D</text>
<path d="M164.00,597.00 C160.27,600.56 160.27,609.64 164.00,613.20" fill="none" stroke="#2a2a2a" stroke-width="1.0"/>
<text transform="translate(171.10,609.20) scale(1.1,1.0)" x="-3.61" y="0" font-family="Liberation Sans" font-size="13" fill="#111" >0</text>
<path d="M177.70,597.00 C181.43,600.56 181.43,609.64 177.70,613.20" fill="none" stroke="#2a2a2a" stroke-width="1.0"/>
<path d="M181.90,595.50 C185.50,599.59 185.50,610.01 181.90,614.10" fill="none" stroke="#2a2a2a" stroke-width="1.8"/>
<line x1="190" y1="604.1" x2="198.9" y2="604.1" stroke="#111" stroke-width="1.2"/>
<line x1="190" y1="607.9" x2="198.9" y2="607.9" stroke="#111" stroke-width="1.2"/>
<rect x="206.5" y="601.6" width="5.8" height="8.2" fill="#000" />
<rect x="221.2" y="601.6" width="5.7" height="8.2" fill="#000" />
<rect x="39.5" y="622.5" width="243.5" height="17" fill="#ffffe1" stroke="#111" stroke-width="1"/>
<text x="43.88" y="634.50" font-family="Liberation Sans" font-size="12.5" fill="#111" textLength="22.10" lengthAdjust="spacing" >diff(</text>
<rect x="71.4" y="626.6" width="3.799999999999997" height="5.4" fill="#000" />
<rect x="85.1" y="626.6" width="4.0" height="5.4" fill="#000" />
<rect x="98.8" y="626.6" width="4.200000000000003" height="5.4" fill="#000" />
<text x="75.98" y="634.50" font-family="Liberation Sans" font-size="12.5" fill="#111" >,</text>
<text x="89.98" y="634.50" font-family="Liberation Sans" font-size="12.5" fill="#111" >,</text>
<text x="104.23" y="634.50" font-family="Liberation Sans" font-size="12.5" fill="#111" >)</text>
<text x="115.74" y="634.50" font-family="Liberation Sans" font-size="12.5" fill="#111" textLength="5.31" lengthAdjust="spacing" >-</text>
<text x="129.42" y="634.50" font-family="Liberation Sans" font-size="12.5" fill="#111" textLength="47.99" lengthAdjust="spacing" >function</text>
<text x="184.66" y="634.50" font-family="Liberation Sans" font-size="12.5" fill="#111" textLength="10.99" lengthAdjust="spacing" >is</text>
<text x="201.97" y="634.50" font-family="Liberation Sans" font-size="12.5" fill="#111" textLength="18.82" lengthAdjust="spacing" >not</text>
<text x="228.48" y="634.50" font-family="Liberation Sans" font-size="12.5" fill="#111" textLength="48.57" lengthAdjust="spacing" >defined.</text>
<rect x="0" y="90" width="942" height="1" fill="#b8b8b8" />
<rect x="0" y="91" width="942" height="1" fill="#7f7f7f" />
<rect x="0" y="92" width="942" height="1" fill="#a0a0a0" />
<rect x="1" y="90" width="1" height="848" fill="#708080" />
<rect x="2" y="93" width="1" height="845" fill="#c8c8c8" />
<rect x="0" y="0" width="942" height="1" fill="#ff0000" />
<rect x="0" y="937" width="942" height="1" fill="#ff0000" />
<rect x="0" y="0" width="1" height="938" fill="#ff0000" />
<rect x="941" y="0" width="1" height="938" fill="#ff0000" />
</svg></body></html>
